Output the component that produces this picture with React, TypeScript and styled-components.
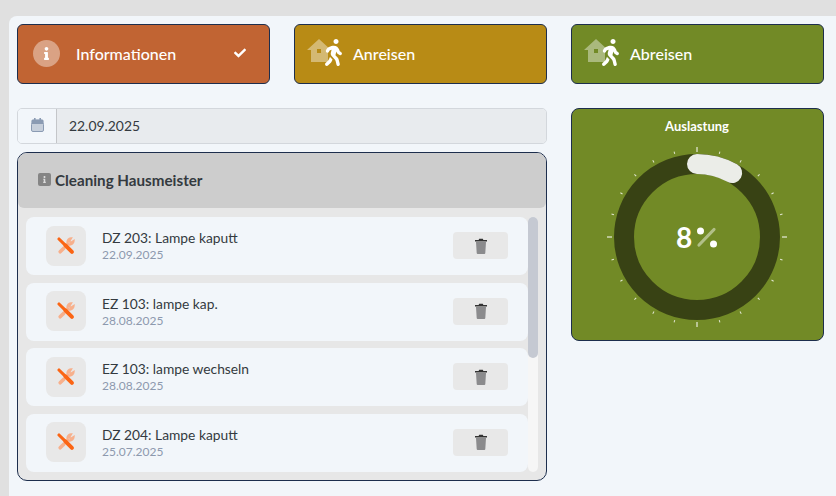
import React from 'react';
import styled, { createGlobalStyle } from 'styled-components';
import { FaCheck, FaInfo, FaWalking } from 'react-icons/fa';

const GlobalStyle = createGlobalStyle`
  html, body {
    margin: 0;
    padding: 0;
    height: 100%;
    overflow: hidden;
    background: #e0e0e0;
    font-family: Lato, "Open Sans", sans-serif;
  }
  * { box-sizing: border-box; }
`;

const Panel = styled.main`
  margin: 16px 0 0 9px;
  height: 480px;
  padding: 8px 12px 0 8px;
  background: #f2f6fa;
  border-radius: 8px 0 0 0;
  display: grid;
  grid-template-columns: repeat(3, 253px);
  grid-template-rows: 60px 1fr;
  column-gap: 24px;
  row-gap: 24px;
`;

const NavButton = styled.button<{ $color: string }>`
  display: flex;
  align-items: center;
  padding: 0 0 2px;
  height: 60px;
  background: ${({ $color }) => $color};
  border: 1px solid #1d2e4d;
  border-radius: 6px;
  color: #fff;
  font-family: inherit;
  font-size: 16px;
  font-weight: 500;
  text-align: left;
`;

const InfoBadge = styled.span`
  width: 27px;
  height: 27px;
  margin-left: 15px;
  margin-right: 16px;
  border-radius: 50%;
  background: rgba(255, 255, 255, 0.4);
  display: flex;
  align-items: center;
  justify-content: center;
  font-size: 13px;
`;

const Check = styled(FaCheck)`
  margin-left: auto;
  margin-right: 23px;
  font-size: 12px;
`;

const TravelIcon = styled.span`
  position: relative;
  display: block;
  width: 35px;
  height: 28px;
  margin-left: 12px;
  margin-right: 11px;
`;

const HouseSvg = styled.svg`
  position: absolute;
  left: 0;
  top: 0;
  opacity: 0.4;
`;

const WalkerGlyph = styled(FaWalking)`
  position: absolute;
  left: 13px;
  top: 0;
  font-size: 27px;
`;

const LeftColumn = styled.div`
  grid-column: 1 / span 2;
  display: flex;
  flex-direction: column;
  gap: 8px;
`;

const DateField = styled.div`
  display: flex;
  height: 36px;
  border: 1px solid #d3d7dc;
  border-radius: 5px;
  overflow: hidden;
`;

const DateAddon = styled.span`
  width: 39px;
  display: flex;
  align-items: center;
  justify-content: center;
  padding-bottom: 2px;
  background: #f2f6fa;
  border-right: 1px solid #c4c6c9;
`;

const DateValue = styled.span`
  flex: 1;
  display: flex;
  align-items: center;
  padding: 0 0 2px 12px;
  background: #e8ebee;
  color: #343a40;
  font-size: 13.9px;
`;

const Card = styled.section`
  height: 329px;
  background: #e7e7e7;
  border: 1px solid #1d2e4d;
  border-radius: 10px;
  overflow: hidden;
`;

const CardHeader = styled.h2`
  margin: 0;
  height: 55px;
  display: flex;
  align-items: center;
  gap: 4px;
  padding: 0 0 2px 20px;
  background: #cdcdcd;
  border-radius: 0 0 6px 6px;
  color: #343a40;
  font-size: 15.2px;
  font-weight: 700;
`;

const HeaderBadge = styled.span`
  width: 13px;
  height: 13px;
  border-radius: 2px;
  background: #858585;
  color: #dcdcdc;
  font-size: 7px;
  display: flex;
  align-items: center;
  justify-content: center;
`;

const ListRow = styled.div`
  display: flex;
  margin: 9px 8px 0;
  height: 255px;
`;

const List = styled.ul`
  list-style: none;
  flex: 1;
  margin: 0;
  padding: 0;
  display: flex;
  flex-direction: column;
  gap: 7.5px;
`;

const ScrollTrack = styled.div`
  flex: 0 0 10px;
  background: #f6f6f6;
  border-radius: 5px;
`;

const ScrollThumb = styled.div`
  height: 141px;
  background: #c5c9d2;
  border-radius: 5px;
`;

const Item = styled.li`
  flex: 0 0 58px;
  display: flex;
  align-items: center;
  padding: 0 20px;
  background: #f2f6fa;
  border-radius: 8px;
`;

const ToolBox = styled.span`
  width: 40px;
  height: 40px;
  margin-right: 16px;
  margin-bottom: 1px;
  background: #e8e8e8;
  border-radius: 8px;
  display: flex;
  align-items: center;
  justify-content: center;
`;

const ItemText = styled.div`
  flex: 1;
  display: flex;
  flex-direction: column;
  gap: 1px;
  padding-bottom: 1px;
`;

const ItemTitle = styled.span`
  color: #343a40;
  font-size: 13.8px;
  line-height: 17px;
`;

const ItemDate = styled.span`
  color: #8d99ae;
  font-size: 12px;
  line-height: 15px;
`;

const DeleteButton = styled.button`
  width: 55px;
  height: 27px;
  padding: 0;
  margin-bottom: 1px;
  border: 0;
  border-radius: 4px;
  background: #e8e8e8;
  display: flex;
  align-items: center;
  justify-content: center;
`;

const GaugeCard = styled.section`
  height: 233px;
  background: #728a26;
  border: 1px solid #1d2e4d;
  border-radius: 8px;
  display: flex;
  flex-direction: column;
  align-items: center;
  color: #fff;
`;

const GaugeTitle = styled.h3`
  margin: 9px 1px 0 0;
  font-size: 13px;
  line-height: 16px;
  font-weight: 700;
`;

const GaugeWrap = styled.div`
  position: relative;
  width: 190px;
  height: 190px;
  margin: 8px 1px 0 0;
`;

const GaugeValue = styled.div`
  position: absolute;
  inset: 0;
  display: flex;
  align-items: center;
  justify-content: center;
  gap: 4px;
  font-size: 28px;
  font-weight: 700;
`;

const HouseIcon = () => (
  <HouseSvg width="24" height="23" viewBox="0 0 24 23" aria-hidden="true">
    <path
      fillRule="evenodd"
      fill="#fff"
      d="M12 0 L24 11 L21 11 L21 23 L4 23 L4 11 L0 11 Z M10 10 L10 14 L14 14 L14 10 Z"
    />
  </HouseSvg>
);

const CalendarIcon = () => (
  <svg width="13" height="14" viewBox="0 0 13 14" aria-hidden="true">
    <rect x="0.5" y="1.5" width="12" height="12" rx="1.5" fill="#c6cfdb" />
    <path d="M0.5 6 V3 A1.5 1.5 0 0 1 2 1.5 H11 A1.5 1.5 0 0 1 12.5 3 V6 Z" fill="#8a9bb3" />
    <rect x="0.5" y="5" width="12" height="8.5" rx="1.5" fill="none" stroke="#8a9bb3" />
    <rect x="3" y="0" width="1.6" height="3" fill="#8a9bb3" />
    <rect x="8.4" y="0" width="1.6" height="3" fill="#8a9bb3" />
  </svg>
);

const TrashIcon = () => (
  <svg width="14" height="16" viewBox="0 0 14 16" aria-hidden="true">
    <path d="M2 4 H12 L11.3 15 A1 1 0 0 1 10.3 16 H3.7 A1 1 0 0 1 2.7 15 Z" fill="#8b8b8d" />
    <path d="M1 2 H4.6 L5.2 0.8 H8.8 L9.4 2 H13 V3.4 H1 Z" fill="#333" />
  </svg>
);

const ToolsIcon = () => (
  <svg width="18" height="18" viewBox="0 0 20 20" aria-hidden="true">
    <g fill="none" stroke="#f7b08c" strokeLinecap="round">
      <path d="M3.5 16.5 L7.5 12.5" strokeWidth="4" />
      <path d="M10.5 9.5 L12.5 7.5" strokeWidth="3" />
      <path d="M11.6 6.2 A4.2 4.2 0 0 1 15.4 1.6 L13.6 4.6 L15.4 6.4 L18.4 4.6 A4.2 4.2 0 0 1 13.8 8.4" strokeWidth="2.4" />
    </g>
    <g fill="none" stroke="#fb6514" strokeLinecap="round">
      <path d="M2.2 2.2 L8 8" strokeWidth="3.4" />
      <path d="M9.4 9.4 L16.6 16.6" strokeWidth="4.4" />
    </g>
  </svg>
);

const PercentIcon = () => (
  <svg width="22" height="22" viewBox="0 0 22 22" aria-hidden="true">
    <path d="M3 19 L18 3.5" stroke="#fff" strokeOpacity="0.45" strokeWidth="3.2" strokeLinecap="round" />
    <circle cx="4.5" cy="5" r="3.5" fill="#fff" />
    <circle cx="17.5" cy="18" r="3.5" fill="#fff" />
  </svg>
);

const Gauge: React.FC<{ percent: number }> = ({ percent }) => {
  const radius = 73;
  const length = 2 * Math.PI * radius;
  const ticks = Array.from({ length: 24 }, (_, i) => i * 15);
  return (
    <GaugeWrap>
      <svg width="190" height="190" viewBox="0 0 190 190" aria-hidden="true">
        {ticks.map((deg) => {
          const major = deg % 90 === 0;
          return (
            <line
              key={deg}
              x1="95"
              x2="95"
              y1={major ? 5 : 6.5}
              y2={major ? 10 : 9}
              stroke="#fff"
              strokeOpacity={major ? 1 : 0.8}
              strokeWidth="1"
              transform={`rotate(${deg} 95 95)`}
            />
          );
        })}
        <circle cx="95" cy="95" r={radius} fill="none" stroke="#384214" strokeWidth="20" />
        <circle
          cx="95"
          cy="95"
          r={radius}
          fill="none"
          stroke="#ebede8"
          strokeWidth="20"
          strokeLinecap="round"
          strokeDasharray={`${(length * percent) / 100} ${length}`}
          transform="rotate(-90 95 95)"
        />
      </svg>
      <GaugeValue>
        <span>{percent}</span>
        <PercentIcon />
      </GaugeValue>
    </GaugeWrap>
  );
};

const entries = [
  { title: 'DZ 203: Lampe kaputt', date: '22.09.2025' },
  { title: 'EZ 103: lampe kap.', date: '28.08.2025' },
  { title: 'EZ 103: lampe wechseln', date: '28.08.2025' },
  { title: 'DZ 204: Lampe kaputt', date: '25.07.2025' },
];

export default function App() {
  return (
    <>
      <GlobalStyle />
      <Panel>
        <NavButton $color="#c16433">
          <InfoBadge>
            <FaInfo />
          </InfoBadge>
          Informationen
          <Check />
        </NavButton>
        <NavButton $color="#b88b15">
          <TravelIcon>
            <HouseIcon />
            <WalkerGlyph />
          </TravelIcon>
          Anreisen
        </NavButton>
        <NavButton $color="#728a26">
          <TravelIcon>
            <HouseIcon />
            <WalkerGlyph />
          </TravelIcon>
          Abreisen
        </NavButton>

        <LeftColumn>
          <DateField>
            <DateAddon>
              <CalendarIcon />
            </DateAddon>
            <DateValue>22.09.2025</DateValue>
          </DateField>
          <Card>
            <CardHeader>
              <HeaderBadge>
                <FaInfo />
              </HeaderBadge>
              Cleaning Hausmeister
            </CardHeader>
            <ListRow>
              <List>
                {entries.map((entry) => (
                  <Item key={entry.title}>
                    <ToolBox>
                      <ToolsIcon />
                    </ToolBox>
                    <ItemText>
                      <ItemTitle>{entry.title}</ItemTitle>
                      <ItemDate>{entry.date}</ItemDate>
                    </ItemText>
                    <DeleteButton>
                      <TrashIcon />
                    </DeleteButton>
                  </Item>
                ))}
              </List>
              <ScrollTrack>
                <ScrollThumb />
              </ScrollTrack>
            </ListRow>
          </Card>
        </LeftColumn>

        <GaugeCard>
          <GaugeTitle>Auslastung</GaugeTitle>
          <Gauge percent={8} />
        </GaugeCard>
      </Panel>
    </>
  );
}
